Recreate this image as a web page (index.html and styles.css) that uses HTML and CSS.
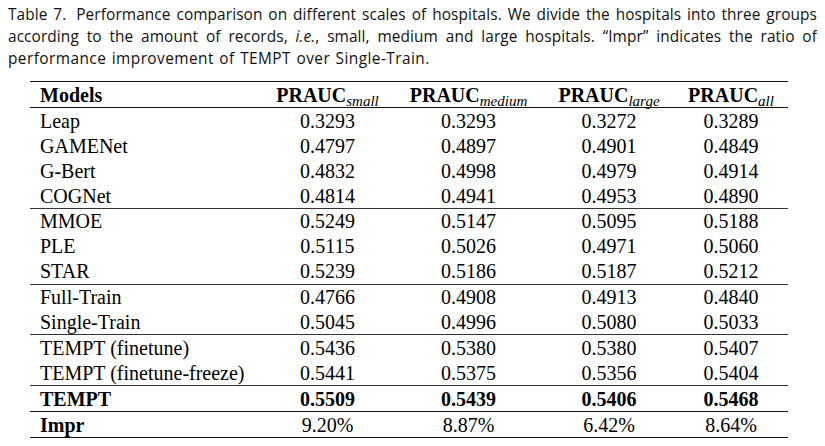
FILE: index.html
```html
<!DOCTYPE html>
<html>
<head>
<meta charset="utf-8">
<link rel="stylesheet" href="styles.css">
</head>
<body>
<p class="caption"><span class="line full"><span class="label">Table 7.</span> Performance comparison on different scales of hospitals. We divide the hospitals into three groups</span><span class="line full">according to the amount of records, <i>i.e.</i>, small, medium and large hospitals. “Impr” indicates the ratio of</span><span class="line last">performance improvement of TEMPT over Single-Train.</span></p>
<table class="results">
  <colgroup>
    <col class="c-model"><col class="c-small"><col class="c-medium"><col class="c-large"><col class="c-all">
  </colgroup>
  <thead>
    <tr>
      <th class="name">Models</th>
      <th>PRAUC<sub>small</sub></th>
      <th>PRAUC<sub>medium</sub></th>
      <th>PRAUC<sub>large</sub></th>
      <th>PRAUC<sub>all</sub></th>
    </tr>
  </thead>
  <tbody>
    <tr><td class="name">Leap</td><td>0.3293</td><td>0.3293</td><td>0.3272</td><td>0.3289</td></tr>
    <tr><td class="name">GAMENet</td><td>0.4797</td><td>0.4897</td><td>0.4901</td><td>0.4849</td></tr>
    <tr><td class="name">G-Bert</td><td>0.4832</td><td>0.4998</td><td>0.4979</td><td>0.4914</td></tr>
    <tr class="end"><td class="name">COGNet</td><td>0.4814</td><td>0.4941</td><td>0.4953</td><td>0.4890</td></tr>
    <tr><td class="name">MMOE</td><td>0.5249</td><td>0.5147</td><td>0.5095</td><td>0.5188</td></tr>
    <tr><td class="name">PLE</td><td>0.5115</td><td>0.5026</td><td>0.4971</td><td>0.5060</td></tr>
    <tr class="end"><td class="name">STAR</td><td>0.5239</td><td>0.5186</td><td>0.5187</td><td>0.5212</td></tr>
    <tr><td class="name">Full-Train</td><td>0.4766</td><td>0.4908</td><td>0.4913</td><td>0.4840</td></tr>
    <tr class="end"><td class="name">Single-Train</td><td>0.5045</td><td>0.4996</td><td>0.5080</td><td>0.5033</td></tr>
    <tr><td class="name">TEMPT (finetune)</td><td>0.5436</td><td>0.5380</td><td>0.5380</td><td>0.5407</td></tr>
    <tr class="end"><td class="name">TEMPT (finetune-freeze)</td><td>0.5441</td><td>0.5375</td><td>0.5356</td><td>0.5404</td></tr>
    <tr class="end best"><td class="name">TEMPT</td><td>0.5509</td><td>0.5439</td><td>0.5406</td><td>0.5468</td></tr>
    <tr class="impr"><td class="name">Impr</td><td>9.20%</td><td>8.87%</td><td>6.42%</td><td>8.64%</td></tr>
  </tbody>
</table>
</body>
</html>
```
FILE: styles.css
```css
html, body {
  background: #ffffff;
}
body {
  margin: 8px;
  color: #000;
}
.caption {
  margin: -4px 0 0 0;
  font-family: "Open Sans", "Noto Sans", sans-serif;
  font-size: 15.4px;
  line-height: 21.8px;
  letter-spacing: 0.1px;
  color: #111;
}
.caption .line {
  display: block;
  white-space: nowrap;
}
.caption .line.full {
  text-align: justify;
  text-align-last: justify;
}
.caption .line.last {
  letter-spacing: 0.45px;
  word-spacing: 1px;
}
.caption .label {
  margin-right: 4px;
}
.results {
  margin: 12px 0 0 22px;
  border-collapse: collapse;
  table-layout: fixed;
  width: 758px;
  font-family: "Liberation Serif", "Times New Roman", serif;
  font-size: 20px;
  color: #000;
  border-top: 1.5px solid #111;
  border-bottom: 1.5px solid #111;
}
.c-model { width: 232px; }
.c-small { width: 131px; }
.c-medium { width: 151px; }
.c-large { width: 130px; }
.c-all { width: 114px; }
.results th,
.results td {
  padding: 0 8px;
  height: 24.9px;
  line-height: 24px;
  text-align: center;
  white-space: nowrap;
}
.results th {
  font-weight: bold;
  height: 25px;
  border-bottom: 1.5px solid #111;
}
.results sub {
  font-weight: normal;
  font-style: italic;
  font-size: 15px;
  vertical-align: -4px;
  line-height: 0;
}
.results .name {
  text-align: left;
  padding-left: 10px;
}
.results tr.end td {
  border-bottom: 1.5px solid #333;
}
.results tr.best td {
  font-weight: bold;
  border-bottom-color: #111;
}
.results tr.impr td.name {
  font-weight: bold;
}
```
